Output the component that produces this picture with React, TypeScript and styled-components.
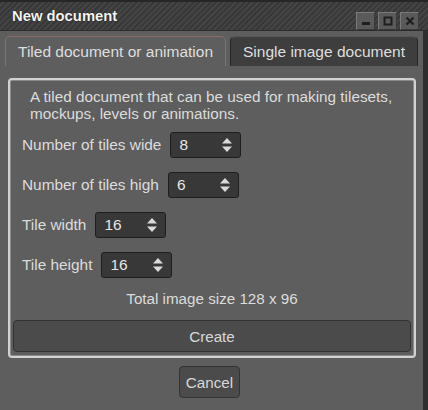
import React from "react";
import styled, { createGlobalStyle } from "styled-components";

const Global = createGlobalStyle`
  html, body { margin: 0; padding: 0; background: #2e2e2e; }
  body { font-family: "Liberation Sans", Arial, sans-serif; }
`;

const Window = styled.div`
  width: 428px;
  height: 410px;
  display: flex;
  flex-direction: column;
  background: #5e5e5e;
  overflow: hidden;
`;

const TitleBar = styled.div`
  height: 31px;
  flex: none;
  display: flex;
  align-items: flex-start;
  justify-content: space-between;
  box-sizing: border-box;
  border-top: 2px solid #262626;
  border-bottom: 1px solid #2c2c2c;
  background: repeating-linear-gradient(
    135deg,
    #383838 0px,
    #383838 2px,
    #444444 2px,
    #444444 4px
  );
`;

const Title = styled.div`
  color: #f4f4f4;
  font-weight: bold;
  font-size: 14.8px;
  padding: 6px 0 0 12px;
  text-shadow: 0 0 1px #000;
`;

const WinButtons = styled.div`
  display: flex;
  gap: 3px;
  padding: 10px 9px 0 0;
`;

const WinButton = styled.div`
  width: 19px;
  height: 18px;
  box-sizing: border-box;
  background: #5a5a5a;
  border: 1px solid #7a7a7a;
  border-right-color: #3a3a3a;
  border-bottom-color: #3a3a3a;
  display: flex;
  align-items: center;
  justify-content: center;
`;

const Body = styled.div`
  flex: 1;
  display: flex;
  flex-direction: column;
  border-right: 5px solid #2e2e2e;
`;

const TabBar = styled.div`
  display: flex;
  gap: 4px;
  padding: 5px 0 0 5px;
  height: 35px;
  box-sizing: border-box;
`;

const Tab = styled.div<{ $active?: boolean }>`
  height: 30px;
  box-sizing: border-box;
  padding: 0 12px;
  display: flex;
  align-items: center;
  font-size: 15.5px;
  color: #dedede;
  border-radius: 5px 5px 0 0;
  border: 1px solid ${(p) => (p.$active ? "#767676" : "#262626")};
  border-bottom: none;
  border-top-color: ${(p) => (p.$active ? "#8a6a64" : "#575757")};
  background: ${(p) => (p.$active ? "#5e5e5e" : "#3e3e3e")};
`;

const Panel = styled.div`
  margin: 12px 7px 0 8px;
  border: 2px solid #d2d2d2;
  border-radius: 4px;
  box-shadow: inset 0 0 0 1px #8a8a8a;
  padding: 8px 3px 4px 3px;
  display: flex;
  flex-direction: column;
`;

const Description = styled.div`
  color: #dcdcdc;
  font-size: 15.3px;
  line-height: 17px;
  padding: 0 6px 0 17px;
`;

const Row = styled.div<{ $first?: boolean }>`
  display: flex;
  align-items: center;
  gap: 9px;
  height: 26px;
  margin-top: ${(p) => (p.$first ? "10px" : "14px")};
  padding-left: 9px;
`;

const Label = styled.span`
  color: #dcdcdc;
  font-size: 15.4px;
`;

const Spin = styled.div`
  width: 71px;
  height: 26px;
  box-sizing: border-box;
  background: #383838;
  border: 1px solid #1e1e1e;
  border-radius: 3px;
  display: flex;
  align-items: center;
  justify-content: space-between;
  padding: 0 7px 0 8px;
  color: #e6e6e6;
  font-size: 15.5px;
`;

const Total = styled.div`
  color: #dcdcdc;
  font-size: 15.2px;
  text-align: center;
  margin-top: 12px;
`;

const Button = styled.div<{ $wide?: boolean }>`
  height: 32px;
  box-sizing: border-box;
  background: #4b4b4b;
  border: 1px solid #333333;
  border-radius: 4px;
  color: #d8d8d8;
  font-size: 15.2px;
  display: flex;
  align-items: center;
  justify-content: center;
  ${(p) => (p.$wide ? "margin-top: 13px;" : "width: 61px;")}
`;

const Footer = styled.div`
  display: flex;
  justify-content: center;
  padding-top: 8px;
  padding-right: 4px;
`;

const Arrows = () => (
  <svg width="12" height="16" viewBox="0 0 12 16">
    <path d="M6 1 L11 6.5 L1 6.5 Z" fill="#dadada" />
    <path d="M1 9.5 L11 9.5 L6 15 Z" fill="#dadada" />
  </svg>
);

const SpinBox = ({ value }: { value: string }) => (
  <Spin>
    <span>{value}</span>
    <Arrows />
  </Spin>
);

export default function App() {
  return (
    <>
      <Global />
      <Window>
        <TitleBar>
          <Title>New document</Title>
          <WinButtons>
            <WinButton>
              <svg width="10" height="10" viewBox="0 0 10 10">
                <rect x="1" y="6" width="8" height="3" fill="#1e1e1e" />
              </svg>
            </WinButton>
            <WinButton>
              <svg width="10" height="10" viewBox="0 0 10 10">
                <rect x="1.5" y="1.5" width="7" height="7" fill="none" stroke="#1e1e1e" strokeWidth="2" />
              </svg>
            </WinButton>
            <WinButton>
              <svg width="10" height="10" viewBox="0 0 10 10">
                <path d="M1.5 1.5 L8.5 8.5 M8.5 1.5 L1.5 8.5" stroke="#1e1e1e" strokeWidth="2.2" />
              </svg>
            </WinButton>
          </WinButtons>
        </TitleBar>
        <Body>
          <TabBar>
            <Tab $active>Tiled document or animation</Tab>
            <Tab>Single image document</Tab>
          </TabBar>
          <Panel>
            <Description>
              A tiled document that can be used for making tilesets, mockups, levels or animations.
            </Description>
            <Row $first>
              <Label>Number of tiles wide</Label>
              <SpinBox value="8" />
            </Row>
            <Row>
              <Label>Number of tiles high</Label>
              <SpinBox value="6" />
            </Row>
            <Row>
              <Label>Tile width</Label>
              <SpinBox value="16" />
            </Row>
            <Row>
              <Label>Tile height</Label>
              <SpinBox value="16" />
            </Row>
            <Total>Total image size 128 x 96</Total>
            <Button $wide>Create</Button>
          </Panel>
          <Footer>
            <Button>Cancel</Button>
          </Footer>
        </Body>
      </Window>
    </>
  );
}
